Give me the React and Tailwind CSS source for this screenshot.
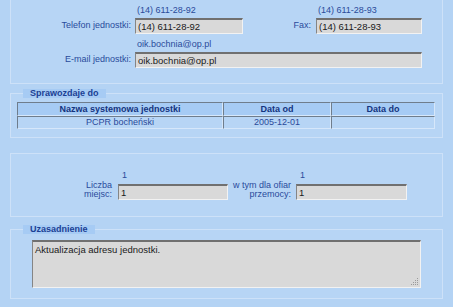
import React from "react";

const Field = ({ children, className }) => (
  <div
    className={
      "h-[16px] shrink-0 bg-[#d9d9d9] border-t-2 border-l border-t-[#707070] border-l-[#858585] border-b border-r border-b-[#f2f2f2] border-r-[#f2f2f2] pl-[2px] text-[9.5px] leading-[13px] text-[#1a1a1a] whitespace-nowrap overflow-hidden " +
      className
    }
  >
    {children}
  </div>
);

const Legend = ({ children }) => (
  <div className="absolute left-[12px] top-[-5px] h-[9px] px-[7px] bg-[#a6cbf4] text-[9px] leading-[9px] font-bold text-[#1b3f94]">
    {children}
  </div>
);

const HCell = ({ children }) => (
  <div className="h-[14px] bg-[#a6cbf4] border-t border-l border-t-[#6f7d8c] border-l-[#6f7d8c] border-b border-r border-b-[#d6e7fa] border-r-[#d6e7fa] text-center text-[9px] leading-[12px] font-bold text-[#14347f]">
    {children}
  </div>
);

const DCell = ({ children }) => (
  <div className="h-[13px] border-t border-l border-t-[#6f7d8c] border-l-[#6f7d8c] border-b border-r border-b-[#d6e7fa] border-r-[#d6e7fa] text-center text-[9px] leading-[11px] text-[#2a4a9a]">
    {children}
  </div>
);

export default function App() {
  return (
    <div className="w-[453px] h-[307px] overflow-hidden bg-[#b4d3f4] px-[10px] flex flex-col font-['Liberation_Sans',Arial,sans-serif] text-[9px] text-[#294b9c]">
      {/* Panel 1 */}
      <div className="border border-t-0 border-[#cde1f8] bg-[#b7d5f5] pt-[4px] pb-[15px]">
        <div className="flex h-[12px] leading-[12px] text-[9px] text-[#2a4b9b]">
          <div className="w-[124px] shrink-0" />
          <div className="w-[108px] shrink-0 pl-[2px]">(14) 611-28-92</div>
          <div className="w-[73px] shrink-0" />
          <div className="pl-[2px]">(14) 611-28-93</div>
        </div>
        <div className="flex items-center mt-[2px]">
          <div className="w-[120px] shrink-0 text-right">Telefon jednostki:</div>
          <Field className="ml-[4px] w-[108px]">(14) 611-28-92</Field>
          <div className="w-[68px] shrink-0 text-right">Fax:</div>
          <Field className="ml-[5px] w-[106px]">(14) 611-28-93</Field>
        </div>
        <div className="flex h-[12px] leading-[12px] mt-[4px] text-[#2a4b9b]">
          <div className="w-[124px] shrink-0" />
          <div className="pl-[2px]">oik.bochnia@op.pl</div>
        </div>
        <div className="flex items-center mt-[2px]">
          <div className="w-[120px] shrink-0 text-right">E-mail jednostki:</div>
          <Field className="ml-[4px] w-[287px]">oik.bochnia@op.pl</Field>
        </div>
      </div>

      {/* Panel 2 */}
      <div className="relative mt-[9px] border border-[#cde1f8] bg-[#b7d5f5] pt-[8px] px-[6px] pb-[8px]">
        <Legend>Sprawozdaje do</Legend>
        <div className="grid grid-cols-[206px_108px_104px]">
          <HCell>Nazwa systemowa jednostki</HCell>
          <HCell>Data od</HCell>
          <HCell>Data do</HCell>
          <DCell>PCPR bocheński</DCell>
          <DCell>2005-12-01</DCell>
          <DCell></DCell>
        </div>
      </div>

      {/* Panel 3 */}
      <div className="mt-[15px] border border-[#cde1f8] bg-[#b7d5f5] pt-[15px] pb-[16px]">
        <div className="flex h-[12px] leading-[12px] text-[#2a4b9b]">
          <div className="w-[107px] shrink-0" />
          <div className="w-[110px] shrink-0 pl-[4px]">1</div>
          <div className="w-[68px] shrink-0" />
          <div className="pl-[4px]">1</div>
        </div>
        <div className="flex items-end">
          <div className="w-[101px] shrink-0 text-right leading-[9px] pb-[1px]">
            Liczba
            <br />
            miejsc:
          </div>
          <Field className="ml-[6px] w-[110px]">1</Field>
          <div className="w-[63px] shrink-0 text-right leading-[9px] pb-[1px] whitespace-nowrap">
            w tym dla ofiar
            <br />
            przemocy:
          </div>
          <Field className="ml-[5px] w-[111px]">1</Field>
        </div>
      </div>

      {/* Panel 4 */}
      <div className="relative mt-[12px] border border-[#cde1f8] bg-[#b7d5f5] pt-[10px] pl-[21px] pb-[10px]">
        <Legend>Uzasadnienie</Legend>
        <div className="relative w-[389px] h-[48px] bg-[#d9d9d9] border-t-2 border-l border-t-[#707070] border-l-[#858585] border-b border-r border-b-[#f2f2f2] border-r-[#f2f2f2] pl-[2px] pt-[2px] text-[9.5px] leading-[12px] text-[#1a1a1a]">
          Aktualizacja adresu jednostki.
          <svg
            className="absolute right-[1px] bottom-[1px]"
            width="8"
            height="8"
            viewBox="0 0 8 8"
          >
            <rect x="6" y="0" width="1" height="1" fill="#9a9a9a" />
            <rect x="4" y="2" width="1" height="1" fill="#9a9a9a" />
            <rect x="6" y="2" width="1" height="1" fill="#9a9a9a" />
            <rect x="2" y="4" width="1" height="1" fill="#9a9a9a" />
            <rect x="4" y="4" width="1" height="1" fill="#9a9a9a" />
            <rect x="6" y="4" width="1" height="1" fill="#9a9a9a" />
            <rect x="0" y="6" width="1" height="1" fill="#9a9a9a" />
            <rect x="2" y="6" width="1" height="1" fill="#9a9a9a" />
            <rect x="4" y="6" width="1" height="1" fill="#9a9a9a" />
            <rect x="6" y="6" width="1" height="1" fill="#9a9a9a" />
          </svg>
        </div>
      </div>

      <div className="mt-[8px] -mx-[10px] border-t border-[#cde1f8]" />
    </div>
  );
}
